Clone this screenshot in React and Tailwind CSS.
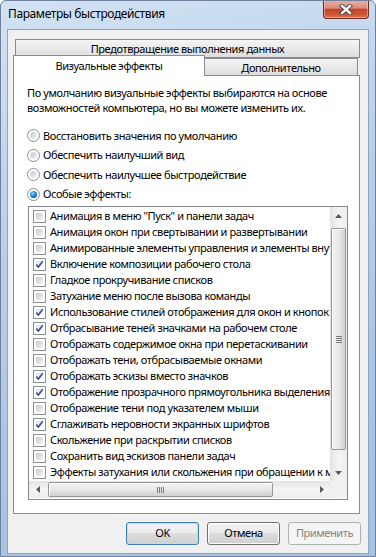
import React from 'react';

const effects = [
  ['Анимация в меню "Пуск" и панели задач', false],
  ['Анимация окон при свертывании и развертывании', false],
  ['Анимированные элементы управления и элементы внутри окна', false],
  ['Включение композиции рабочего стола', true],
  ['Гладкое прокручивание списков', false],
  ['Затухание меню после вызова команды', false],
  ['Использование стилей отображения для окон и кнопок', true],
  ['Отбрасывание теней значками на рабочем столе', true],
  ['Отображать содержимое окна при перетаскивании', false],
  ['Отображать тени, отбрасываемые окнами', false],
  ['Отображать эскизы вместо значков', true],
  ['Отображение прозрачного прямоугольника выделения', true],
  ['Отображение тени под указателем мыши', false],
  ['Сглаживать неровности экранных шрифтов', true],
  ['Скольжение при раскрытии списков', false],
  ['Сохранить вид эскизов панели задач', false],
  ['Эффекты затухания или скольжения при обращении к меню', false],
];

const modes = [
  ['Восстановить значения по умолчанию', false],
  ['Обеспечить наилучший вид', false],
  ['Обеспечить наилучшее быстродействие', false],
  ['Особые эффекты:', true],
];

function Radio({ on }) {
  return (
    <span className="flex w-[13px] h-[13px] shrink-0 rounded-full border border-[#8e8f8f] bg-white p-[2px]">
      {on ? (
        <span className="flex-1 rounded-full bg-[radial-gradient(circle_at_40%_35%,#8fd3ff,#1b73c9_55%,#0a3a78)]" />
      ) : (
        <span className="flex-1 rounded-full bg-gradient-to-br from-[#c4c8ce] to-[#f3f3f3]" />
      )}
    </span>
  );
}

function Check({ on }) {
  return (
    <span className="relative flex w-[13px] h-[13px] shrink-0 border border-[#8e8f8f] bg-white p-[2px]">
      {on ? (
        <span className="flex-1 bg-gradient-to-br from-[#e2e4e8] to-[#fbfbfb]" />
      ) : (
        <span className="flex-1 bg-gradient-to-br from-[#c9cdd3] to-[#f2f2f2]" />
      )}
      {on && (
        <svg className="absolute left-0 top-0" width="11" height="11" viewBox="0 0 11 11">
          <path d="M2.2 5.6 L4.3 8 L8.8 2.2" fill="none" stroke="#3e5694" strokeWidth="1.7" />
        </svg>
      )}
    </span>
  );
}

function Arrow({ dir }) {
  const d = {
    up: 'M0 4 L3.5 0 L7 4 Z',
    down: 'M0 0 L7 0 L3.5 4 Z',
    left: 'M4 0 L4 7 L0 3.5 Z',
    right: 'M0 0 L4 3.5 L0 7 Z',
  }[dir];
  const vertical = dir === 'up' || dir === 'down';
  return (
    <svg width={vertical ? 7 : 4} height={vertical ? 4 : 7} viewBox={vertical ? '0 0 7 4' : '0 0 4 7'}>
      <path d={d} fill="#5a5a5a" />
    </svg>
  );
}

function Button({ children, variant }) {
  if (variant === 'disabled') {
    return (
      <button className="w-[73px] h-[23px] rounded-[3px] border border-[#adb2b5] bg-[#f4f4f4] text-[#838383]">
        {children}
      </button>
    );
  }
  const ring = variant === 'default'
    ? 'border-[#3c7fb1] shadow-[inset_0_0_0_1px_#b6e0f6]'
    : 'border-[#707070] shadow-[inset_0_0_0_1px_#fcfcfc]';
  return (
    <button className={`w-[73px] h-[23px] rounded-[3px] border ${ring} bg-[linear-gradient(#f2f2f2,#ebebeb_50%,#dddddd_50%,#cfcfcf)] text-black`}>
      {children}
    </button>
  );
}

export default function App() {
  return (
    <div
      className="w-[376px] h-[557px] overflow-hidden rounded-t-[6px] border border-[#6f829b] bg-[linear-gradient(165deg,#d2e2f3,#bad1ea_35%,#aac6e6_70%,#a4c2e5)] text-[11px] tracking-[-0.4px] text-black select-none"
      style={{ fontFamily: '"Noto Sans", "Open Sans", sans-serif' }}
    >
      {/* title bar */}
      <div className="flex justify-between items-start h-[28px]">
        <span className="ml-[7px] mt-[5px] leading-[16px] text-[12px]">Параметры быстродействия</span>
        <button className="mr-[6px] -mt-px w-[46px] h-[19px] flex items-center justify-center rounded-b-[4px] border border-t-0 border-[#6e2a20] bg-[linear-gradient(#ebb0a3,#da8b7b_45%,#c5412b_52%,#cf5537_80%,#e0744f)] shadow-[inset_0_0_0_1px_rgba(255,220,210,0.45)]">
          <svg width="14" height="11" viewBox="0 0 14 11">
            <path d="M3 2 L11 9 M11 2 L3 9" stroke="#3b3b3b" strokeWidth="4.2" strokeLinecap="square" />
            <path d="M3 2 L11 9 M11 2 L3 9" stroke="#ffffff" strokeWidth="2.4" strokeLinecap="square" />
          </svg>
        </button>
      </div>

      {/* client area */}
      <div className="ml-[6px] w-[362px] h-[525px] border border-[#8ea3bd] bg-[#f0f0f0] pt-[9px]">
        {/* back tab row */}
        <div className="ml-[7px] w-[345px] h-[19px] border border-[#898c95] bg-gradient-to-b from-[#f5f5f5] to-[#dedede] text-center leading-[17px]">
          Предотвращение выполнения данных
        </div>
        {/* front tab row */}
        <div className="flex items-end -mt-[3px] ml-[5px] h-[21px]">
          <div className="relative z-10 w-[192px] h-[21px] border border-b-0 border-[#898c95] bg-white text-center leading-[19px]">
            Визуальные эффекты
          </div>
          <div className="-ml-px w-[154px] h-[17px] mb-px border border-b-0 border-[#898c95] bg-gradient-to-b from-[#f5f5f5] to-[#dedede] text-center leading-[18px]">
            Дополнительно
          </div>
        </div>

        {/* panel */}
        <div className="-mt-px ml-[5px] w-[347px] h-[439px] border border-[#898c95] bg-white pt-[9px] pl-[13px]">
          <p className="leading-[15px] whitespace-nowrap">
            По умолчанию визуальные эффекты выбираются на основе
            <br />
            возможностей компьютера, но вы можете изменить их.
          </p>

          <div className="mt-[11px]">
            {modes.map(([label, on]) => (
              <div key={label} className="flex items-center gap-[3px] h-[19.5px]">
                <Radio on={on} />
                <span className="leading-[16px]">{label}</span>
              </div>
            ))}
          </div>

          {/* list box */}
          <div className="mt-[2px] ml-px w-[320px] h-[294px] border border-[#828790] flex flex-col">
            <div className="flex h-[274px]">
              <div className="w-[301px] overflow-hidden pt-px">
                {effects.map(([label, on]) => (
                  <div key={label} className="flex items-center gap-[4px] h-[16px] pl-[4px] whitespace-nowrap">
                    <Check on={on} />
                    <span className="leading-[16px]">{label}</span>
                  </div>
                ))}
              </div>
              {/* vertical scrollbar */}
              <div className="w-[17px] flex flex-col items-center bg-gradient-to-r from-[#e3e3e3] via-[#f4f4f4] to-[#ededed]">
                <div className="h-[17px] flex items-center justify-center">
                  <Arrow dir="up" />
                </div>
                <div className="mt-[4px] w-[15px] h-[222px] rounded-[2px] border border-[#979797] bg-gradient-to-r from-[#f4f4f4] via-[#e9e9e9] to-[#d0d0d0] shadow-[inset_1px_1px_0_#ffffff] flex flex-col items-center justify-center gap-[1px]">
                  <span className="w-[6px] h-px bg-[#7a7a7a]" />
                  <span className="w-[6px] h-px bg-[#7a7a7a]" />
                  <span className="w-[6px] h-px bg-[#7a7a7a]" />
                  <span className="w-[6px] h-px bg-[#7a7a7a]" />
                </div>
                <div className="flex-1" />
                <div className="h-[17px] flex items-center justify-center">
                  <Arrow dir="down" />
                </div>
              </div>
            </div>
            {/* horizontal scrollbar */}
            <div className="flex h-[17px]">
              <div className="w-[301px] flex items-center bg-gradient-to-b from-[#e3e3e3] via-[#f4f4f4] to-[#ededed]">
                <div className="w-[17px] flex justify-center">
                  <Arrow dir="left" />
                </div>
                <div className="ml-[2px] w-[225px] h-[15px] rounded-[2px] border border-[#979797] bg-gradient-to-b from-[#f4f4f4] via-[#e9e9e9] to-[#d0d0d0] shadow-[inset_1px_1px_0_#ffffff] flex items-center justify-center gap-[1px]">
                  <span className="w-px h-[6px] bg-[#7a7a7a]" />
                  <span className="w-px h-[6px] bg-[#7a7a7a]" />
                  <span className="w-px h-[6px] bg-[#7a7a7a]" />
                  <span className="w-px h-[6px] bg-[#7a7a7a]" />
                </div>
                <div className="flex-1" />
                <div className="w-[17px] flex justify-center">
                  <Arrow dir="right" />
                </div>
              </div>
              <div className="w-[17px] bg-[#f0f0f0]" />
            </div>
          </div>
        </div>

        {/* buttons */}
        <div className="mt-[8px] pr-[7px] flex justify-end gap-[8px]">
          <Button variant="default">OK</Button>
          <Button>Отмена</Button>
          <Button variant="disabled">Применить</Button>
        </div>
      </div>
    </div>
  );
}
